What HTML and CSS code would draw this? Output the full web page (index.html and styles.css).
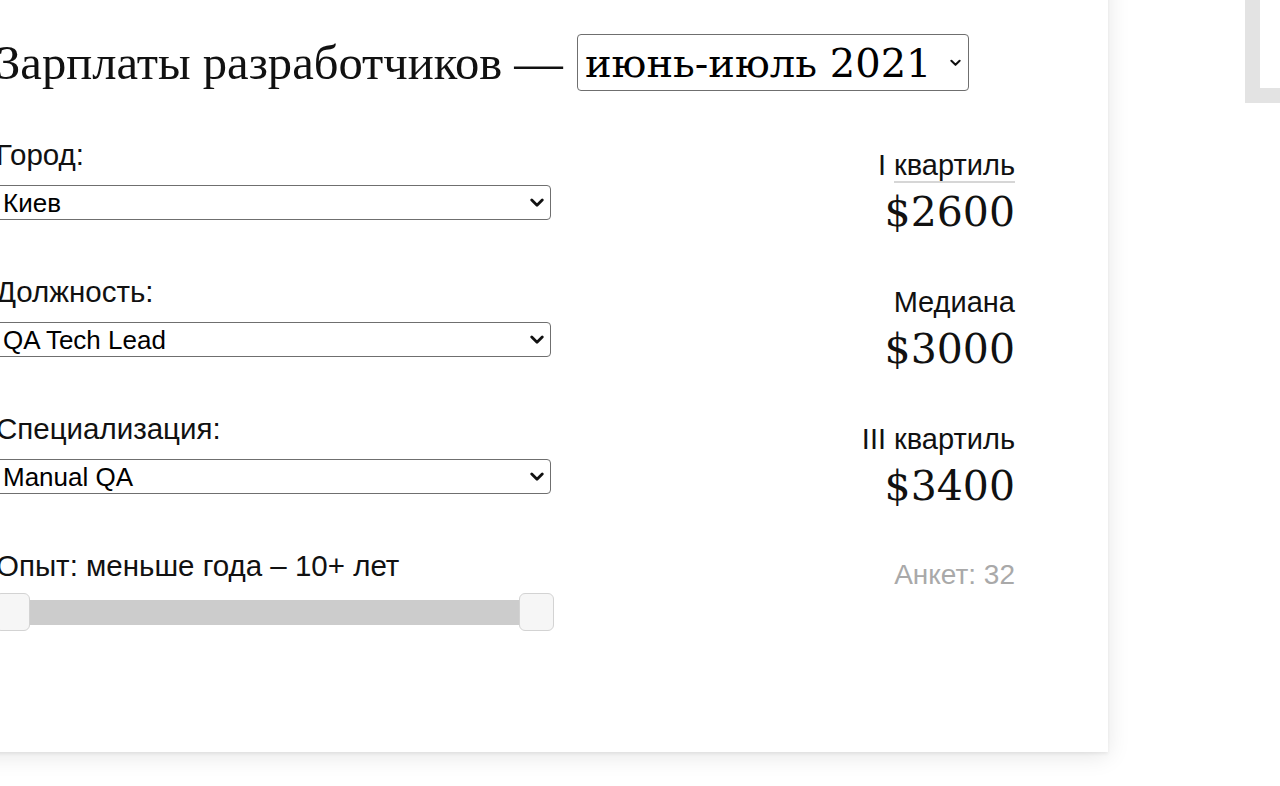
FILE: index.html
```html
<!DOCTYPE html>
<html lang="ru">
<head>
  <meta charset="UTF-8" />
  <meta name="viewport" content="width=device-width, initial-scale=1.0"/>
  <title>Зарплаты разработчиков</title>
  <link rel="stylesheet" href="styles.css">
</head>
<body>
  <div class="page">
    <div class="card">
      <h1 class="title">
        <span>Зарплаты разработчиков —</span>
        <span class="select-wrap period">
          <select>
            <option>июнь-июль 2021</option>
          </select>
          <svg class="chevron" viewBox="0 0 12 8" width="11" height="8"><path d="M1.5 1.5 6 6l4.5-4.5" fill="none" stroke="#111" stroke-width="2.2" stroke-linecap="round" stroke-linejoin="round"/></svg>
        </span>
      </h1>

      <div class="content">
        <div class="filters">
          <div class="field">
            <label>Город:</label>
            <span class="select-wrap">
              <select><option>Киев</option></select>
              <svg class="chevron" viewBox="0 0 12 8" width="14" height="10"><path d="M1.5 1.5 6 6l4.5-4.5" fill="none" stroke="#111" stroke-width="2.4" stroke-linecap="round" stroke-linejoin="round"/></svg>
            </span>
          </div>
          <div class="field">
            <label>Должность:</label>
            <span class="select-wrap">
              <select><option>QA Tech Lead</option></select>
              <svg class="chevron" viewBox="0 0 12 8" width="14" height="10"><path d="M1.5 1.5 6 6l4.5-4.5" fill="none" stroke="#111" stroke-width="2.4" stroke-linecap="round" stroke-linejoin="round"/></svg>
            </span>
          </div>
          <div class="field">
            <label>Специализация:</label>
            <span class="select-wrap">
              <select><option>Manual QA</option></select>
              <svg class="chevron" viewBox="0 0 12 8" width="14" height="10"><path d="M1.5 1.5 6 6l4.5-4.5" fill="none" stroke="#111" stroke-width="2.4" stroke-linecap="round" stroke-linejoin="round"/></svg>
            </span>
          </div>
          <div class="field">
            <label>Опыт: меньше года – 10+ лет</label>
            <div class="range">
              <span class="handle"></span>
              <span class="handle"></span>
            </div>
          </div>
        </div>

        <div class="results">
          <div class="stat">
            <div class="stat-label">I <span class="term">квартиль</span></div>
            <div class="stat-value">$2600</div>
          </div>
          <div class="stat">
            <div class="stat-label">Медиана</div>
            <div class="stat-value">$3000</div>
          </div>
          <div class="stat">
            <div class="stat-label">III квартиль</div>
            <div class="stat-value">$3400</div>
          </div>
          <div class="count">Анкет: 32</div>
        </div>
      </div>
    </div>

    <div class="corner"></div>
  </div>
</body>
</html>
```

FILE: styles.css
```css
* {
  margin: 0;
  padding: 0;
  box-sizing: border-box;
}

html, body {
  height: 100%;
  overflow: hidden;
  background: #fff;
  font-family: "Liberation Sans", Arial, sans-serif;
  color: #111;
}

.page {
  position: relative;
  display: flex;
  align-items: flex-start;
}

.card {
  width: 1148px;
  height: 792px;
  margin: -40px 0 0 -40px;
  padding: 74px 93px 0 36px;
  background: #fff;
  box-shadow: 0 2px 3px rgba(0, 0, 0, 0.06), 0 4px 22px rgba(0, 0, 0, 0.1);
}

.title {
  display: flex;
  align-items: center;
  gap: 14px;
  height: 57px;
  font-family: "Liberation Serif", "Times New Roman", serif;
  font-size: 48.6px;
  font-weight: normal;
  white-space: nowrap;
}

.select-wrap {
  position: relative;
  display: block;
}

.select-wrap select {
  display: block;
  width: 100%;
  appearance: none;
  -webkit-appearance: none;
  background: #fff;
  border: 1px solid #6f6f6f;
  border-radius: 4px;
  color: #000;
  font-family: "Liberation Sans", Arial, sans-serif;
  font-size: 26px;
  height: 35px;
  padding: 0 30px 0 6px;
}

.chevron {
  position: absolute;
  right: 7px;
  top: 50%;
  transform: translateY(-50%);
  pointer-events: none;
}

.period {
  width: 392px;
}

.period select {
  height: 57px;
  font-family: "DejaVu Serif", Georgia, serif;
  font-size: 40px;
  padding: 0 34px 0 7px;
}

.period .chevron {
  right: 8px;
}

.content {
  display: flex;
  justify-content: space-between;
  margin-top: 47px;
}

.filters {
  width: 555px;
}

.field {
  margin-bottom: 55px;
}

.field label {
  display: block;
  font-size: 29.5px;
  line-height: 34px;
  margin-bottom: 13px;
}

.field:last-child label {
  margin-bottom: 10px;
}

.range {
  display: flex;
  justify-content: space-between;
  align-items: center;
  height: 38px;
  margin: 0 -3px 0 -1px;
  background: linear-gradient(#cccccc, #cccccc) center / calc(100% - 14px) 25px no-repeat;
}

.handle {
  width: 35px;
  height: 38px;
  background: #f6f6f6;
  border: 1px solid #d3d3d3;
  border-radius: 6px;
}

.results {
  margin-top: 10px;
  text-align: right;
}

.stat {
  margin-bottom: 49px;
}

.stat-label {
  font-size: 29px;
  line-height: 34px;
}

.term {
  border-bottom: 2px solid #d6d6d6;
}

.stat-value {
  margin-top: 6px;
  font-family: "DejaVu Serif", Georgia, serif;
  font-size: 41px;
  line-height: 48px;
}

.count {
  margin-top: -1px;
  font-size: 28px;
  line-height: 34px;
  color: #a9a9a9;
}

.corner {
  position: absolute;
  left: 1245px;
  top: -100px;
  width: 60px;
  height: 203px;
  border-left: 15px solid #e3e3e3;
  border-bottom: 15px solid #e3e3e3;
}
```
